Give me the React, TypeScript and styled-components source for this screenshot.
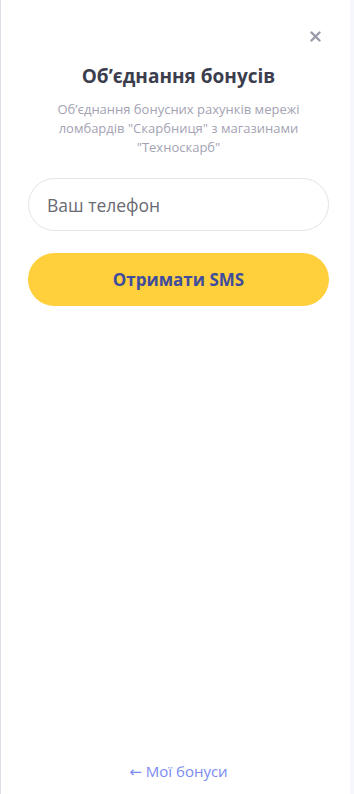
import React, { useState } from 'react';
import styled, { createGlobalStyle } from 'styled-components';

const GlobalStyle = createGlobalStyle`
    html, body {
        margin: 0;
        padding: 0;
        background: #f6f7fc;
        font-family: "Open Sans", "Noto Sans", sans-serif;
    }
    * { box-sizing: border-box; }
`

const Panel = styled.div`
    width: 350px;
    height: 794px;
    background: #fff;
    border-left: 1px solid #dedfe6;
    display: flex;
    flex-direction: column;
    padding: 0 21px 0 27px;
`

const TopBar = styled.div`
    display: flex;
    justify-content: flex-end;
    padding-top: 26px;
    height: 52px;
`

const CloseButton = styled.button`
    width: 20px;
    height: 20px;
    border: none;
    background: none;
    padding: 0;
    margin-right: 4px;
    cursor: pointer;
    display: flex;
    align-items: center;
    justify-content: center;
`

const Title = styled.h2`
    margin: 11px 0 0;
    text-align: center;
    font-size: 19px;
    line-height: 26px;
    font-weight: 700;
    color: #3c3e4e;
`

const Subtitle = styled.p`
    margin: 11px 0 0;
    text-align: center;
    font-size: 13px;
    line-height: 19px;
    color: #a3a3b3;
`

const Form = styled.form`
    display: flex;
    flex-direction: column;
    gap: 22px;
    margin-top: 21px;
`

const PhoneInput = styled.input`
    width: 100%;
    height: 53px;
    border: 1px solid #e3e3ea;
    border-radius: 27px;
    padding: 0 18px;
    font-family: "Open Sans", sans-serif;
    font-size: 17.5px;
    color: #333;
    &::placeholder {
        color: #6a6a72;
    }
    &:focus {
        outline: none;
    }
`

const SubmitButton = styled.button`
    width: 100%;
    height: 53px;
    border: none;
    border-radius: 27px;
    background: #ffcf3c;
    color: #404c9c;
    font-family: "Open Sans", sans-serif;
    font-size: 17px;
    font-weight: 700;
    cursor: pointer;
`

const Footer = styled.div`
    margin-top: auto;
    padding-bottom: 12px;
    text-align: center;
`

const BackLink = styled.a`
    font-size: 15px;
    color: #7b8bf2;
    text-decoration: none;
    cursor: pointer;
`

const Arrow = styled.span`
    font-family: "DejaVu Sans", sans-serif;
    font-size: 15px;
`

export default function App() {
    const [phone, setPhone] = useState('');

    const onSubmit = (e: React.FormEvent<HTMLFormElement>) => {
        e.preventDefault();
    }

    return (
        <>
            <GlobalStyle />
            <Panel>
                <TopBar>
                    <CloseButton aria-label="close">
                        <svg width="11" height="11" viewBox="0 0 11 11">
                            <path d="M1.5 1.5 L9.5 9.5 M9.5 1.5 L1.5 9.5" stroke="#9a9aa8" strokeWidth="2.4" strokeLinecap="round" />
                        </svg>
                    </CloseButton>
                </TopBar>
                <Title>Об’єднання бонусів</Title>
                <Subtitle>Об’єднання бонусних рахунків мережі ломбардів "Скарбниця" з магазинами "Техноскарб"</Subtitle>
                <Form onSubmit={onSubmit}>
                    <PhoneInput
                        value={phone}
                        onChange={(e) => setPhone(e.target.value)}
                        placeholder="Ваш телефон"
                    />
                    <SubmitButton type="submit">Отримати SMS</SubmitButton>
                </Form>
                <Footer>
                    <BackLink><Arrow>←</Arrow> Мої бонуси</BackLink>
                </Footer>
            </Panel>
        </>
    );
}
